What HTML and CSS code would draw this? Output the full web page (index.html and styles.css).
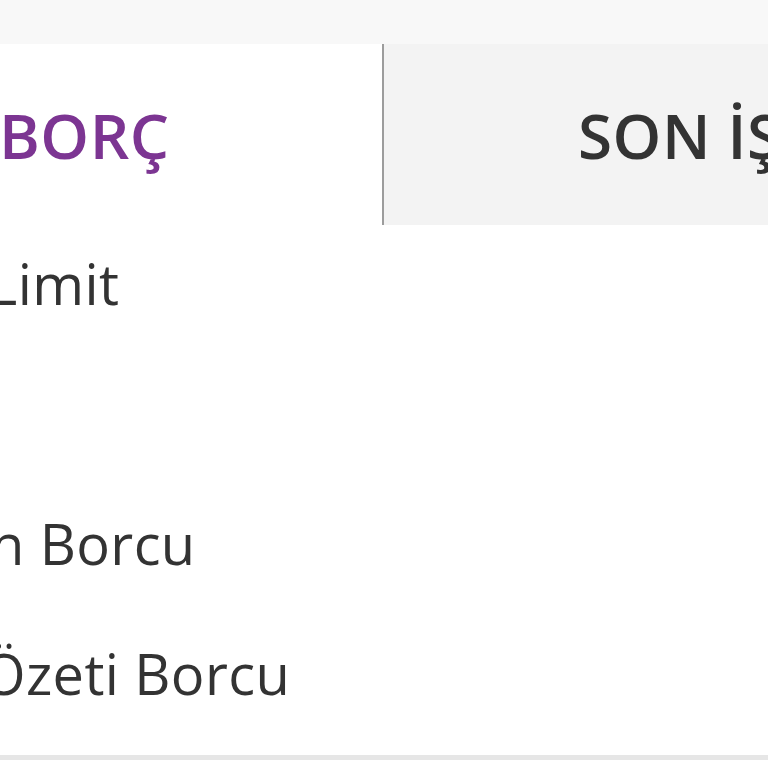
FILE: index.html
```html
<!DOCTYPE html>
<html lang="tr">
<head>
<meta charset="utf-8">
<title>Borç</title>
<link rel="stylesheet" href="styles.css">
</head>
<body>
<div class="topbar"></div>
<div class="tabs">
  <div class="tab tab-active"><span class="tab-label">BORÇ</span></div>
  <div class="tab tab-inactive"><span class="tab-label">SON İŞLEMLER</span></div>
</div>
<ul class="rows">
  <li class="row"><span class="label label-limit">Limit</span></li>
  <li class="row"><span class="label"></span></li>
  <li class="row"><span class="label label-donem">n Borcu</span></li>
  <li class="row"><span class="label label-ozet">Özeti Borcu</span></li>
</ul>
<div class="divider"></div>
</body>
</html>
```
FILE: styles.css
```css
html, body {
  margin: 0;
  padding: 0;
  background: #ffffff;
  overflow: hidden;
}
body {
  font-family: "Open Sans", "Noto Sans", sans-serif;
  color: #333333;
  width: 768px;
}
.topbar {
  height: 44px;
  background: #f8f8f8;
}
.tabs {
  display: flex;
  height: 181px;
}
.tab {
  display: flex;
  align-items: center;
  overflow: hidden;
  white-space: nowrap;
}
.tab-label {
  font-size: 62px;
  font-weight: 600;
  line-height: 1;
  letter-spacing: 0.5px;
}
.tab-active {
  width: 382px;
  background: #ffffff;
  border-right: 2px solid #9c9c9c;
  color: #7c3592;
}
.tab-active .tab-label {
  margin-left: -1px;
}
.tab-inactive {
  flex: 1;
  background: #f3f3f3;
  color: #333333;
  padding-left: 194px;
}
.rows {
  list-style: none;
  margin: 0;
  padding: 0 0 10px 0;
}
.row {
  height: 130px;
  box-sizing: border-box;
  padding-bottom: 14px;
  line-height: 116px;
  font-size: 56px;
  letter-spacing: 0.4px;
  white-space: nowrap;
  overflow: hidden;
}
.label {
  display: inline-block;
}
.label-limit { margin-left: -12px; }
.label-donem { margin-left: -10px; }
.label-ozet { margin-left: -18px; }
.divider {
  height: 5px;
  background: #e6e6e6;
}
```
